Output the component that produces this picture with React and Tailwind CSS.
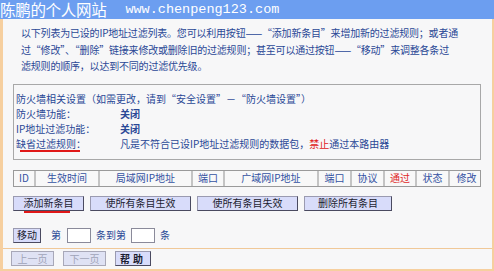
import React from 'react';

const CJK = { fontFamily: '"Noto Sans CJK SC", "Liberation Sans", sans-serif' };

const COLS = [
  { label: 'ID', w: 'w-[20px]' },
  { label: '生效时间', w: 'w-[64px]' },
  { label: '局域网IP地址', w: 'w-[93px]' },
  { label: '端口', w: 'w-[32px]' },
  { label: '广域网IP地址', w: 'w-[94px]' },
  { label: '端口', w: 'w-[33px]' },
  { label: '协议', w: 'w-[33px]' },
  { label: '通过', w: 'w-[32px]', red: true },
  { label: '状态', w: 'w-[33px]' },
  { label: '修改', w: 'w-[35px]' },
];

function Btn({ children, className = '', disabled }) {
  return (
    <button
      type="button"
      className={`h-[15px] flex items-center justify-center text-[10px] leading-none border ${
        disabled
          ? 'bg-[#dfe2f4] border-[#a8a8b8] text-[#a0a4b8]'
          : 'bg-[#d8dcfa] border-t-[#9a9ab0] border-l-[#9a9ab0] border-b-[#4a4a60] border-r-[#4a4a60] text-[#1c1c30]'
      } ${className}`}
    >
      {children}
    </button>
  );
}

export default function App() {
  return (
    <div className="w-[494px] h-[271px] overflow-hidden bg-[#f7f7f8] flex flex-col text-[#2a4896]" style={CJK}>
      {/* watermark bar */}
      <div className="h-[19px] bg-[#6c9ef0] flex items-center text-white whitespace-nowrap shrink-0">
        <span className="text-[15.5px] leading-[19px] tracking-[-0.3px]">陈鹏的个人网站</span>
        <span className="ml-[19px] text-[13.5px] leading-[19px]" style={{ fontFamily: '"Liberation Mono", monospace' }}>
          www.chenpeng123.com
        </span>
      </div>

      <div className="flex-1 flex flex-col border-l-[3px] border-r-2 border-b-2 border-[#f6cf9f]">
        <div className="h-[229px] flex flex-col pl-[10px]">
          <p className="mt-[6px] ml-[8px] text-[10px] leading-[16.5px] whitespace-nowrap tracking-[-0.2px]">
            以下列表为已设的IP地址过滤列表。您可以利用按钮——“添加新条目”来增加新的过滤规则；或者通
            <br />
            过“修改”、“删除”链接来修改或删除旧的过滤规则；甚至可以通过按钮——“移动”来调整各条过
            <br />
            滤规则的顺序，以达到不同的过滤优先级。
          </p>

          <div className="mt-[9px] w-[468px] h-[76px] border border-[#a8a8a8] pt-[6px] pl-[2px] text-[10px] leading-[15px] whitespace-nowrap">
            <div>防火墙相关设置（如需更改，请到“安全设置”－“防火墙设置”）</div>
            <div className="flex">
              <span className="w-[104px]">防火墙功能：</span>
              <span className="font-bold">关闭</span>
            </div>
            <div className="flex">
              <span className="w-[104px]">IP地址过滤功能：</span>
              <span className="font-bold">关闭</span>
            </div>
            <div className="flex">
              <span className="w-[104px] relative">
                缺省过滤规则：
                <span className="absolute left-[4px] top-[14px] w-[60px] h-[2px] bg-[#e01818]" />
              </span>
              <span>
                凡是不符合已设IP地址过滤规则的数据包，<span className="text-[#e02020]">禁止</span>通过本路由器
              </span>
            </div>
          </div>

          <div className="mt-[10px] flex h-[17px] border border-[#9a9a9a] bg-[#f8f8f8] w-[468px]">
            {COLS.map((c, i) => (
              <div
                key={i}
                className={`${c.w} shrink-0 flex items-center justify-center text-[10px] leading-none ${
                  i > 0 ? 'border-l-2 border-[#c4c4c4]' : ''
                } ${c.red ? 'text-[#e02828]' : 'text-[#3452a2]'}`}
              >
                {c.label}
              </div>
            ))}
          </div>

          <div className="mt-[9px] flex gap-[6px]">
            <Btn className="w-[71px] relative">
              添加新条目
              <span className="absolute left-[10px] -bottom-[3px] w-[46px] h-[2px] bg-[#e01818]" />
            </Btn>
            <Btn className="w-[101px]">使所有条目生效</Btn>
            <Btn className="w-[101px]">使所有条目失效</Btn>
            <Btn className="w-[88px]">删除所有条目</Btn>
          </div>

          <div className="mt-[17px] flex items-center text-[10px] leading-none">
            <Btn className="w-[28px] h-[14px]">移动</Btn>
            <span className="ml-[10px]">第</span>
            <span className="ml-[6px] w-[24px] h-[15px] bg-white border border-[#8a8a9a]" />
            <span className="ml-[5px]">条到第</span>
            <span className="ml-[5px] w-[24px] h-[15px] bg-white border border-[#8a8a9a]" />
            <span className="ml-[5px]">条</span>
          </div>
        </div>

        <div className="border-t border-[#f0c898] flex-1 flex items-center gap-[9px] pl-[8px] pb-[1px]">
          <Btn disabled className="w-[43px]">上一页</Btn>
          <Btn disabled className="w-[43px]">下一页</Btn>
          <Btn className="w-[36px] font-bold tracking-[3px]">帮助</Btn>
        </div>
      </div>
    </div>
  );
}
